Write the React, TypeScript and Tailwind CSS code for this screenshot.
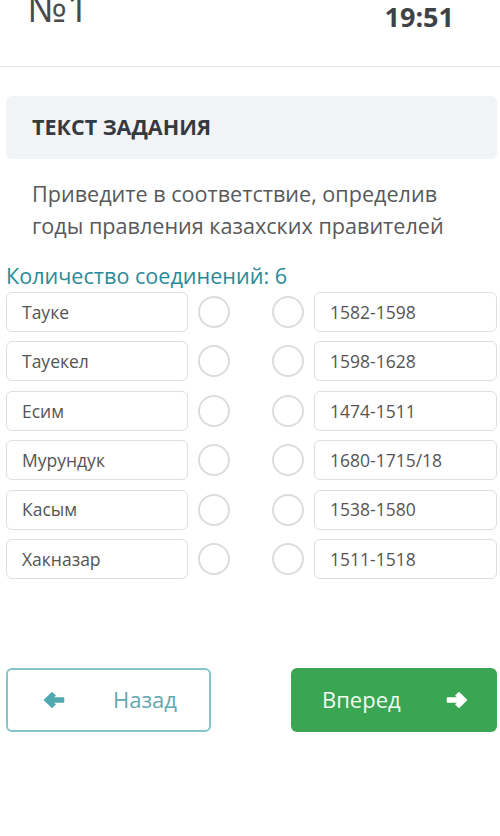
const pairs = [
  ["Тауке", "1582-1598"],
  ["Тауекел", "1598-1628"],
  ["Есим", "1474-1511"],
  ["Мурундук", "1680-1715/18"],
  ["Касым", "1538-1580"],
  ["Хакназар", "1511-1518"],
];

function Arrow({ left, className }: { left?: boolean; className?: string }) {
  return (
    <svg width="22" height="18" viewBox="0 0 22 18" className={className}>
      <g transform={left ? "" : "translate(22 0) scale(-1 1)"}>
        <path
          d="M1.5 9 L9 1.8 L12 4.6 L8.6 7 H20.5 V11 H8.6 L12 13.4 L9 16.2 Z"
          fill="currentColor"
          strokeLinejoin="round"
          stroke="currentColor"
          strokeWidth="1.5"
        />
      </g>
    </svg>
  );
}

export default function App() {
  return (
    <div
      className="w-[500px] h-[836px] bg-white overflow-hidden text-[#555]"
      style={{ fontFamily: '"Open Sans", "Noto Sans", sans-serif' }}
    >
      {/* header */}
      <div className="h-[67px] border-b border-[#e6e6e6] flex justify-between">
        <div className="ml-[27px] -mt-[16px] text-[39px] leading-[46px] text-[#4a4a4a]">№1</div>
        <div className="mr-[46px] mt-[0px] text-[27px] leading-[34px] font-bold text-[#3d4148]">19:51</div>
      </div>

      {/* task title */}
      <div className="ml-[6px] mr-[3px] mt-[29px] h-[63px] rounded-md bg-[#f2f3f6] flex items-center pl-[26px]">
        <span className="text-[21.5px] font-bold text-[#363a40]">ТЕКСТ ЗАДАНИЯ</span>
      </div>

      <p className="mt-[19px] ml-[32px] text-[21.6px] leading-[32px] text-[#58595b]">
        Приведите в соответствие, определив
        <br />
        годы правления казахских правителей
      </p>

      <div className="mt-[20px] ml-[6px] text-[21.6px] leading-[28px] text-[#2a8a99]">
        Количество соединений: 6
      </div>

      <div className="mt-[2px] flex flex-col gap-[9.4px] pl-[6px] pr-[3px]">
        {pairs.map(([l, r]) => (
          <div key={l} className="flex items-center h-[40px]">
            <div className="w-[182px] h-full rounded-md border border-[#dedede] flex items-center pl-[15px] text-[17.5px] text-[#555]">
              {l}
            </div>
            <div className="ml-[10px] w-[32px] h-[32px] rounded-full border-2 border-[#dcdcdc]" />
            <div className="ml-[42px] w-[32px] h-[32px] rounded-full border-2 border-[#dcdcdc]" />
            <div className="ml-[10px] flex-1 h-full rounded-md border border-[#dedede] flex items-center pl-[15px] text-[17.5px] text-[#555]">
              {r}
            </div>
          </div>
        ))}
      </div>

      {/* navigation */}
      <div className="mt-[89px] pl-[6px] pr-[3px] flex justify-between">
        <button className="w-[205px] h-[64px] rounded-md border-2 border-[#86c3cb] flex items-center text-[#5fa9b3]">
          <Arrow left className="ml-[35px] text-[#4fa9b0]" />
          <span className="ml-[48px] text-[22px]">Назад</span>
        </button>
        <button className="w-[206px] h-[64px] rounded-md bg-[#3aa552] flex items-center text-white">
          <span className="ml-[31px] text-[22px] text-[#f1fbf2]">Вперед</span>
          <Arrow className="ml-[45px] text-white" />
        </button>
      </div>
    </div>
  );
}
